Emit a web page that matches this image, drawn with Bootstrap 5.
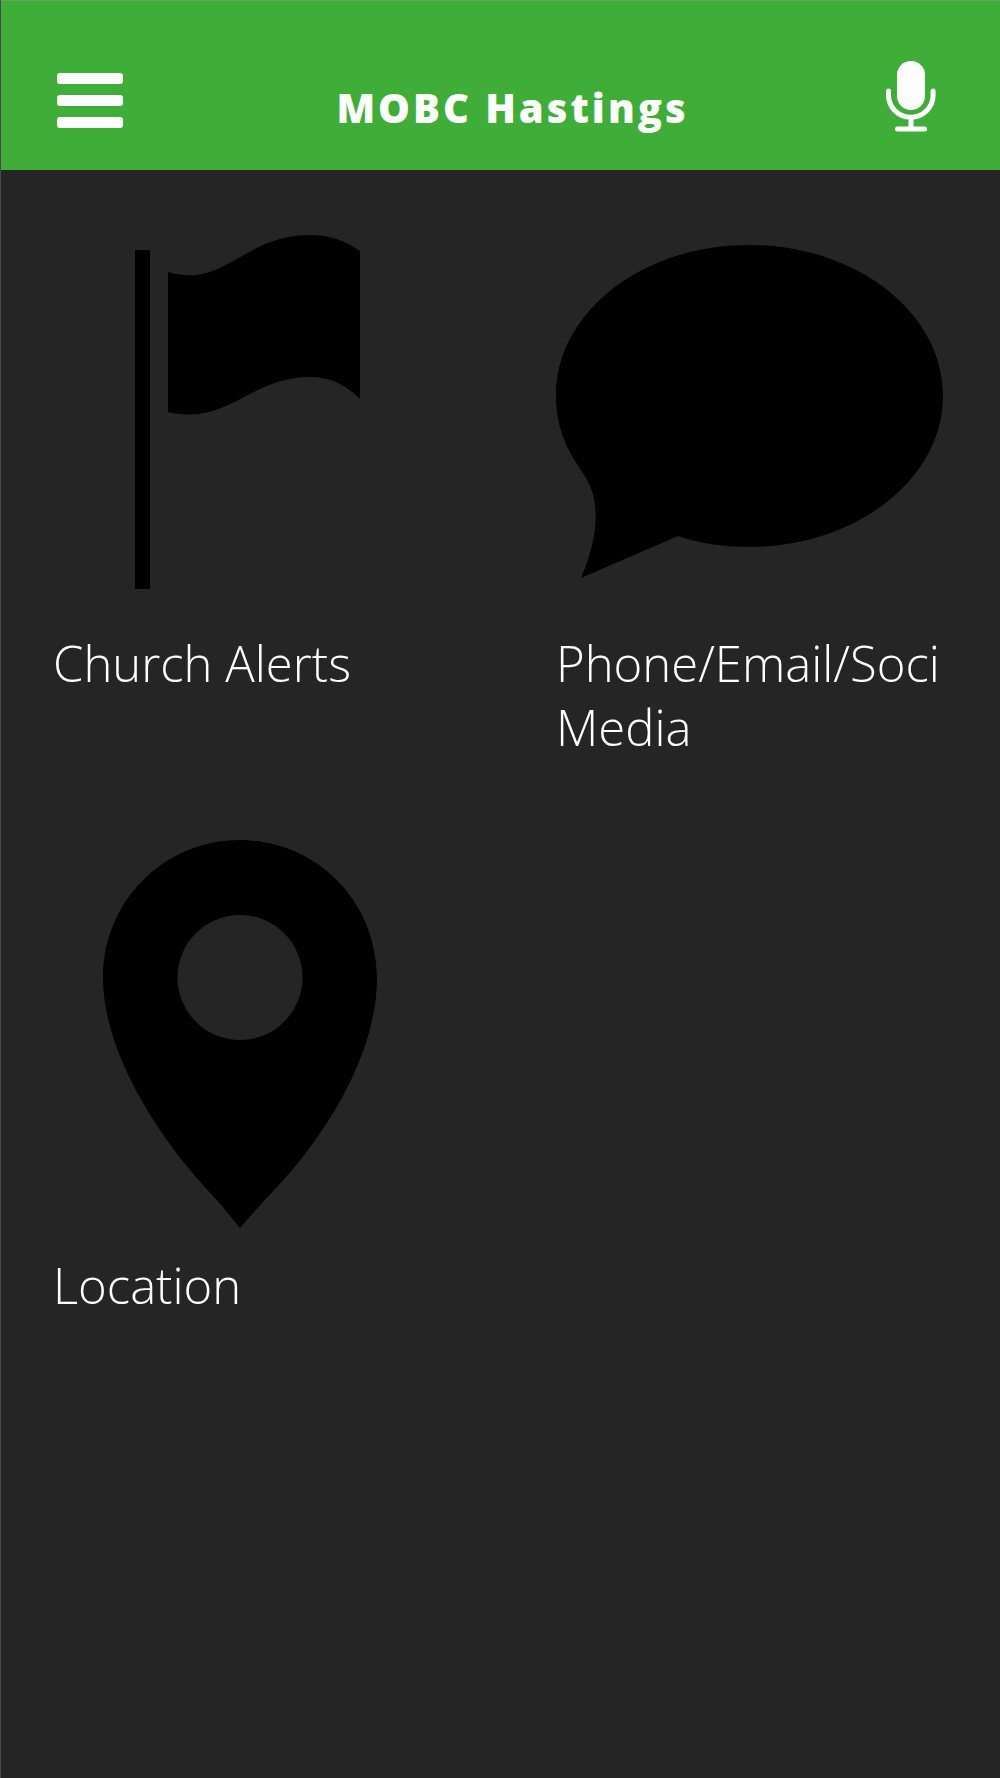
<!DOCTYPE html>
<html lang="en">
<head>
<meta charset="utf-8">
<meta name="viewport" content="width=device-width, initial-scale=1">
<title>MOBC Hastings</title>
<link href="https://cdn.jsdelivr.net/npm/bootstrap@5.3.0/dist/css/bootstrap.min.css" rel="stylesheet">
<style>
  body { background: #252525; color: #fff; font-family: "Open Sans", "Noto Sans", sans-serif; border-left: 1px solid #4a4a4a; }
  .app-bar { background: #3fae38; border-top: 1px solid #64a561; padding: 60px 56px 34px 56px; }
  .app-title { font-size: 40px; line-height: 56px; font-weight: 800; letter-spacing: 3px; padding: 19px 0 0 24px; }
  .icon-btn { line-height: 0; color: #fff; }
  .tile-grid { padding: 48px 56px 48px 52px; display: grid; grid-template-columns: repeat(2, minmax(0, 1fr)); column-gap: 115px; row-gap: 81px; }
  .tile-label { font-size: 49px; line-height: 64px; font-weight: 300; margin-top: 25px; }
</style>
</head>
<body class="min-vh-100">
<header class="app-bar d-flex justify-content-between align-items-start">
  <button type="button" class="icon-btn btn border-0 p-0 pt-2 mt-1" aria-label="Menu">
    <svg width="66" height="56" viewBox="0 0 66 56" fill="currentColor"><rect x="0" y="0" width="66" height="11" rx="3"/><rect x="0" y="22" width="66" height="11" rx="3"/><rect x="0" y="44" width="66" height="11" rx="3"/></svg>
  </button>
  <h1 class="app-title mb-0 flex-grow-1 text-center">MOBC Hastings</h1>
  <button type="button" class="icon-btn btn border-0 p-0" aria-label="Voice search">
    <svg width="66" height="71" viewBox="0 0 66 71"><rect x="19" y="0" width="28" height="49" rx="14" fill="currentColor"/><path d="M10.500 30v4a22.300 22.300 0 0 0 44.600 0v-4M33 57v10M19.500 68h27" fill="none" stroke="currentColor" stroke-width="5" stroke-linecap="round"/></svg>
  </button>
</header>
<main class="tile-grid">
  <a href="#alerts" class="text-reset text-decoration-none">
    <svg class="d-block w-100" viewBox="0 0 388 388"><path d="M82 32h15v339H82zM115 54C172 71 190 17 257 17c20 0 36 6 50 16v148c-14-14-29-22-50-22-60 0-82 49-142 35z"/></svg>
    <div class="tile-label">Church Alerts</div>
  </a>
  <a href="#contact" class="text-reset text-decoration-none">
    <svg class="d-block w-100" viewBox="0 0 388 388"><path d="M193 27c107 0 194 67 194 151 0 83-87 151-194 151-26 0-51-4-71-11l-97 42c15-35 20-70 8-94C27 250 0 228 0 178 0 94 86 27 193 27z"/></svg>
    <div class="tile-label">Phone/Email/Soci Media</div>
  </a>
  <a href="#location" class="text-reset text-decoration-none">
    <svg class="d-block w-100" viewBox="0 0 388 388"><path fill-rule="evenodd" d="M187 0c76 0 137 61 137 138 0 84-62 169-100 209q-20 21-37 41-17-22-37-43C112 303 50 217 50 138 50 61 111 0 187 0zm0 75a62 62 0 1 0 0 125 62 62 0 0 0 0-125z"/></svg>
    <div class="tile-label">Location</div>
  </a>
</main>
<script src="https://cdn.jsdelivr.net/npm/bootstrap@5.3.0/dist/js/bootstrap.bundle.min.js"></script>
</body>
</html>
